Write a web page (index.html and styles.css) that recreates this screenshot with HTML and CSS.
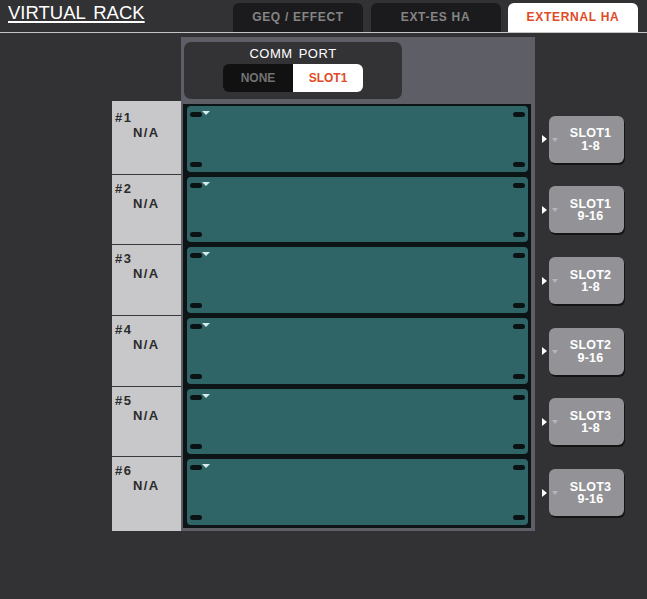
FILE: index.html
```html
<!DOCTYPE html>
<html>
<head>
<meta charset="utf-8">
<link rel="stylesheet" href="styles.css">
</head>
<body>
<div class="header">
  <div class="title">VIRTUAL RACK</div>
  <div class="tabs">
    <div class="tab">GEQ / EFFECT</div>
    <div class="tab">EXT-ES HA</div>
    <div class="tab active">EXTERNAL HA</div>
  </div>
</div>
<div class="main">
  <div class="labels">
    <div class="label"><span class="num">#1</span><span class="na">N/A</span></div>
    <div class="label"><span class="num">#2</span><span class="na">N/A</span></div>
    <div class="label"><span class="num">#3</span><span class="na">N/A</span></div>
    <div class="label"><span class="num">#4</span><span class="na">N/A</span></div>
    <div class="label"><span class="num">#5</span><span class="na">N/A</span></div>
    <div class="label last"><span class="num">#6</span><span class="na">N/A</span></div>
  </div>
  <div class="panel">
    <div class="comm">
      <div class="comm-title">COMM PORT</div>
      <div class="comm-btns">
        <div class="cbtn none">NONE</div>
        <div class="cbtn on">SLOT1</div>
      </div>
    </div>
    <div class="racks">
      <div class="rack"><div class="face"><i class="pill tl"></i><i class="tri"></i><i class="pill bl"></i><i class="pill tr"></i><i class="pill br"></i></div></div>
      <div class="rack"><div class="face"><i class="pill tl"></i><i class="tri"></i><i class="pill bl"></i><i class="pill tr"></i><i class="pill br"></i></div></div>
      <div class="rack"><div class="face"><i class="pill tl"></i><i class="tri"></i><i class="pill bl"></i><i class="pill tr"></i><i class="pill br"></i></div></div>
      <div class="rack"><div class="face"><i class="pill tl"></i><i class="tri"></i><i class="pill bl"></i><i class="pill tr"></i><i class="pill br"></i></div></div>
      <div class="rack"><div class="face"><i class="pill tl"></i><i class="tri"></i><i class="pill bl"></i><i class="pill tr"></i><i class="pill br"></i></div></div>
      <div class="rack"><div class="face"><i class="pill tl"></i><i class="tri"></i><i class="pill bl"></i><i class="pill tr"></i><i class="pill br"></i></div></div>
    </div>
  </div>
  <div class="slots">
    <div class="slot-row"><i class="arrow"></i><div class="sbtn"><i class="down"></i><span>SLOT1<br>1-8</span></div></div>
    <div class="slot-row"><i class="arrow"></i><div class="sbtn"><i class="down"></i><span>SLOT1<br>9-16</span></div></div>
    <div class="slot-row"><i class="arrow"></i><div class="sbtn"><i class="down"></i><span>SLOT2<br>1-8</span></div></div>
    <div class="slot-row"><i class="arrow"></i><div class="sbtn"><i class="down"></i><span>SLOT2<br>9-16</span></div></div>
    <div class="slot-row"><i class="arrow"></i><div class="sbtn"><i class="down"></i><span>SLOT3<br>1-8</span></div></div>
    <div class="slot-row"><i class="arrow"></i><div class="sbtn"><i class="down"></i><span>SLOT3<br>9-16</span></div></div>
  </div>
</div>
</body>
</html>
```

FILE: styles.css
```css
* { box-sizing: border-box; }
html, body {
  margin: 0;
  padding: 0;
  background: #323234;
  width: 647px;
  height: 599px;
  overflow: hidden;
  font-family: "Liberation Sans", Arial, sans-serif;
}
.header {
  height: 33px;
  display: flex;
  align-items: flex-end;
  border-bottom: 1px solid #c4c4c4;
  padding-right: 9px;
}
.title {
  align-self: flex-start;
  margin-top: 2px;
  padding-left: 8px;
  color: #ffffff;
  font-size: 18.5px;
  line-height: 21px;
  word-spacing: 3px;
  text-decoration: underline;
  text-decoration-thickness: 1.5px;
  text-underline-offset: 2px;
}
.tabs {
  margin-left: auto;
  display: flex;
  gap: 7.5px;
}
.tab {
  width: 130px;
  height: 29px;
  background: #1b1b1d;
  border-radius: 6px 6px 0 0;
  color: #858585;
  font-weight: bold;
  font-size: 12px;
  letter-spacing: 0.7px;
  line-height: 29px;
  text-align: center;
}
.tab.active {
  background: #ffffff;
  color: #e04a25;
}
.main {
  display: flex;
  align-items: flex-start;
  margin-top: 4px;
  padding-left: 112px;
}
.labels {
  width: 69px;
  height: 430px;
  margin-top: 64px;
  padding-top: 3px;
  background: #c8c8ca;
  display: grid;
  grid-template-rows: repeat(5, 70.67px) 1fr;
}
.label {
  display: flex;
  flex-direction: column;
  padding: 6px 0 0 3px;
  border-bottom: 1.5px solid #38383a;
  color: #2b2b2b;
  font-weight: bold;
  font-size: 13px;
  line-height: 15px;
  letter-spacing: 1.4px;
}
.label.last { border-bottom: none; }
.na { padding-left: 18px; }
.panel {
  width: 354px;
  height: 494px;
  background: #5e5f66;
  padding: 5px 4px 3px 2px;
}
.comm {
  margin-left: 1px;
  width: 218px;
  height: 57px;
  background: #333336;
  border-radius: 7px;
  display: flex;
  flex-direction: column;
  align-items: center;
  padding-top: 4px;
}
.comm-title {
  color: #ffffff;
  font-size: 13px;
  line-height: 15px;
  letter-spacing: 0.5px;
  word-spacing: 2px;
}
.comm-btns {
  display: flex;
  margin-top: 3px;
}
.cbtn {
  width: 70px;
  height: 28px;
  line-height: 28px;
  text-align: center;
  font-weight: bold;
  font-size: 12px;
}
.cbtn.none {
  background: #111112;
  color: #727272;
  border-radius: 6px 0 0 6px;
}
.cbtn.on {
  background: #ffffff;
  color: #e04a25;
  border-radius: 0 6px 6px 0;
}
.racks {
  margin-top: 5px;
  height: 424px;
  display: grid;
  grid-template-rows: repeat(6, 1fr);
}
.rack {
  background: #0c1415;
  padding: 2px 3px 3px 4px;
}
.face {
  position: relative;
  height: 100%;
  background: #2f6567;
  border-radius: 4px;
}
.pill {
  position: absolute;
  width: 12px;
  height: 5px;
  background: #0b1213;
  border-radius: 3px;
}
.pill.tl { left: 3px; top: 6px; }
.pill.bl { left: 3px; bottom: 5px; }
.pill.tr { right: 3px; top: 6px; }
.pill.br { right: 3px; bottom: 5px; }
.tri {
  position: absolute;
  left: 15px;
  top: 5px;
  width: 0;
  height: 0;
  border-left: 4px solid transparent;
  border-right: 4px solid transparent;
  border-top: 4px solid #d4ecec;
}
.slots {
  margin-top: 67px;
  display: grid;
  grid-template-rows: repeat(6, 70.67px);
}
.slot-row {
  display: flex;
  align-items: center;
  padding-left: 7px;
}
.arrow {
  width: 0;
  height: 0;
  border-top: 4.5px solid transparent;
  border-bottom: 4.5px solid transparent;
  border-left: 5.5px solid #ffffff;
  margin-right: 1.5px;
}
.sbtn {
  position: relative;
  width: 75px;
  height: 47px;
  background: #939397;
  border-radius: 6px;
  box-shadow: 1px 2px 0 #141414;
  display: flex;
  align-items: center;
  justify-content: center;
  padding-left: 9px;
  padding-top: 1px;
  color: #ffffff;
  font-weight: bold;
  font-size: 12.5px;
  line-height: 12.5px;
  letter-spacing: 0.2px;
  text-align: center;
}
.down {
  position: absolute;
  left: 3px;
  top: 22px;
  width: 0;
  height: 0;
  border-left: 3.5px solid transparent;
  border-right: 3.5px solid transparent;
  border-top: 4px solid #b6b6ba;
}
```
